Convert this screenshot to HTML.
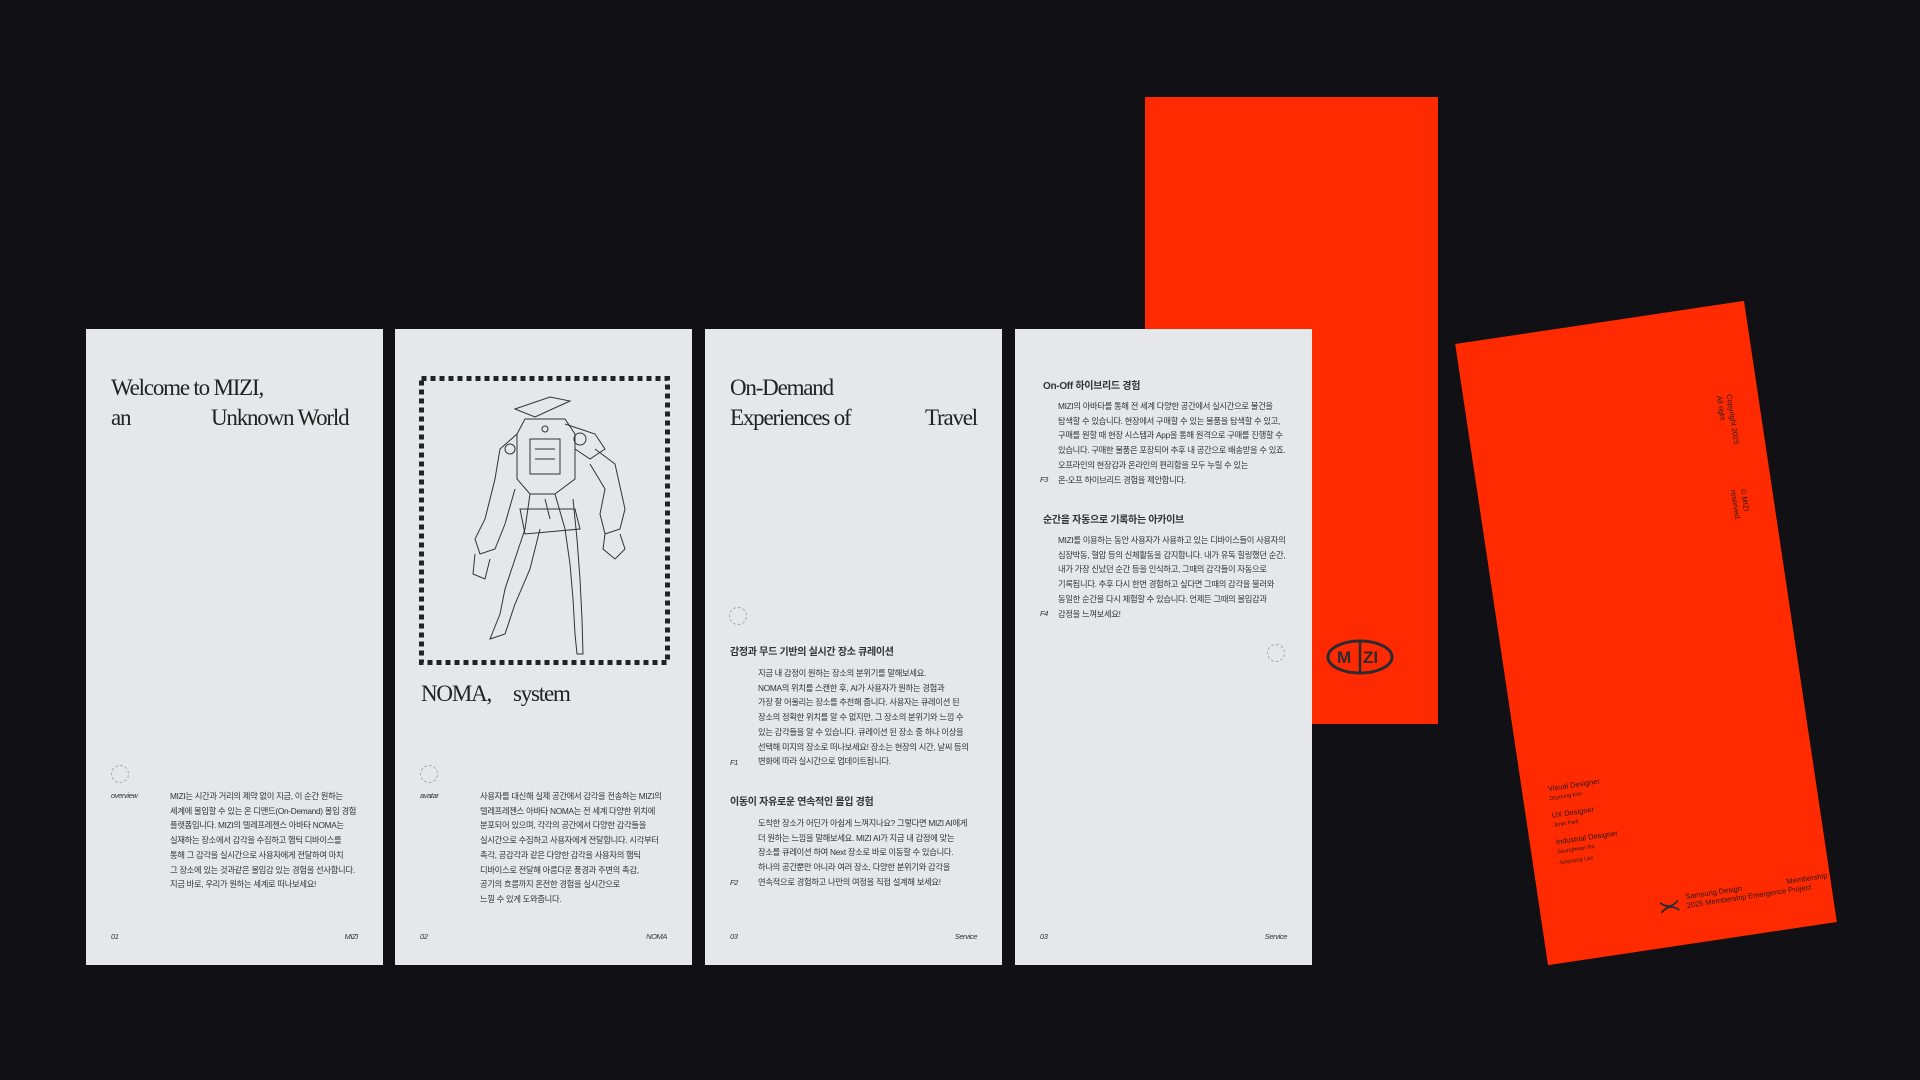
<!DOCTYPE html>
<html><head><meta charset="utf-8"><style>
*{margin:0;padding:0;box-sizing:border-box}
body{width:1920px;height:1080px;background:#111115;position:relative;overflow:hidden;font-family:"Liberation Sans","Noto Sans CJK KR",sans-serif;color:#222}
.abs{position:absolute}
.panel{position:absolute;top:329px;width:297px;height:636px;background:#e6e7eb}
.title{position:absolute;font-family:"Liberation Serif","DejaVu Serif",serif;font-size:23px;letter-spacing:-1.2px;line-height:30px;color:#222;white-space:nowrap}
.body{position:absolute;font-size:8.3px;line-height:14.7px;color:#333;white-space:nowrap;letter-spacing:-0.3px}
.h{position:absolute;font-size:10px;font-weight:bold;color:#333;white-space:nowrap;letter-spacing:-0.3px}
.sm{position:absolute;font-size:7.5px;font-style:italic;color:#333;letter-spacing:-0.4px}
.circ{position:absolute;width:18px;height:18px;border:1.3px dashed #a8a8b8;border-radius:50%}
.foot{position:absolute;top:603px;font-size:7.5px;font-style:italic;color:#333;letter-spacing:-0.4px}
</style></head><body>

<div class="abs" style="left:1145px;top:97px;width:293px;height:627px;background:#ff2a00"></div>
<svg class="abs" style="left:1325px;top:638px" width="70" height="38" viewBox="0 0 70 38">
<ellipse cx="35" cy="19" rx="32" ry="16" fill="none" stroke="#2a2a33" stroke-width="3"/>
<line x1="35" y1="3" x2="35" y2="35" stroke="#2a2a33" stroke-width="2.5"/>
<text x="12" y="25" font-family="Liberation Sans" font-weight="bold" font-size="17" fill="#2a2a33">M</text>
<text x="38" y="25" font-family="Liberation Sans" font-weight="bold" font-size="17" fill="#2a2a33">ZI</text>
</svg>

<!-- panel 1 -->
<div class="panel" style="left:86px">
<div class="title" style="left:25px;top:44px">Welcome to MIZI,</div>
<div class="title" style="left:25px;top:74px">an</div>
<div class="title" style="left:125px;top:74px">Unknown World</div>
<div class="circ" style="left:25px;top:436px"></div>
<div class="sm" style="left:25px;top:462px">overview</div>
<div class="body" style="left:84px;top:460px">MIZI는 시간과 거리의 제약 없이 지금, 이 순간 원하는<br>세계에 몰입할 수 있는 온 디맨드(On-Demand) 몰입 경험<br>플랫폼입니다. MIZI의 텔레프레젠스 아바타 NOMA는<br>실재하는 장소에서 감각을 수집하고 햅틱 디바이스를<br>통해 그 감각을 실시간으로 사용자에게 전달하여 마치<br>그 장소에 있는 것과같은 몰입감 있는 경험을 선사합니다.<br>지금 바로, 우리가 원하는 세계로 떠나보세요!</div>
<div class="foot" style="left:25px">01</div>
<div class="foot" style="right:25px">MIZI</div>
</div>

<!-- panel 2 -->
<div class="panel" style="left:395px">
<svg class="abs" style="left:24px;top:47px" width="251" height="289" viewBox="0 0 251 289"><rect x="2.5" y="2.5" width="246" height="284" fill="none" stroke="#222" stroke-width="5" stroke-dasharray="5 4"/></svg>
<svg class="abs" style="left:60px;top:60px" width="180" height="270" viewBox="0 0 180 270" fill="none" stroke="#333" stroke-width="1">
<path d="M60 20 L95 8 L115 12 L80 28 Z"/><path d="M70 30 L110 30 L120 45 L120 90 L100 105 L75 105 L62 90 L62 45 Z"/>
<path d="M75 50 L105 50 L105 85 L75 85 Z"/><path d="M110 35 L140 45 L150 60 L135 70 L120 60"/>
<path d="M62 45 L45 60 L40 90 L30 130 L20 150 L25 165 L40 160 L50 135 L60 100"/>
<path d="M140 60 L160 75 L170 120 L165 140 L150 145 L145 125 L150 100 L135 75"/>
<path d="M150 145 L148 160 L160 170 L170 160 L165 145"/><path d="M20 165 L18 185 L30 190 L35 170"/>
<path d="M75 105 L70 140 L60 170 L50 200 L45 225 L35 250 L50 245 L60 215 L75 180 L85 140"/>
<path d="M100 105 L110 140 L115 175 L118 210 L120 245 L122 265 L128 265 L127 230 L125 190 L122 150 L118 110"/>
<path d="M65 120 L120 120 L125 140 L70 145 Z"/><path d="M90 110 L95 130 M80 60 L100 60 M80 70 L100 70"/>
<circle cx="90" cy="40" r="3"/><circle cx="125" cy="50" r="6"/><circle cx="55" cy="60" r="5"/>
</svg>
<div class="title" style="left:26px;top:350px">NOMA,</div>
<div class="title" style="left:118px;top:350px">system</div>
<div class="circ" style="left:25px;top:436px"></div>
<div class="sm" style="left:25px;top:462px">avatar</div>
<div class="body" style="left:85px;top:460px">사용자를 대신해 실제 공간에서 감각을 전송하는 MIZI의<br>텔레프레젠스 아바타 NOMA는 전 세계 다양한 위치에<br>분포되어 있으며, 각각의 공간에서 다양한 감각들을<br>실시간으로 수집하고 사용자에게 전달합니다. 시각부터<br>촉각, 공감각과 같은 다양한 감각을 사용자의 햅틱<br>디바이스로 전달해 아름다운 풍경과 주변의 촉감,<br>공기의 흐름까지 온전한 경험을 실시간으로<br>느낄 수 있게 도와줍니다.</div>
<div class="foot" style="left:25px">02</div>
<div class="foot" style="right:25px">NOMA</div>
</div>

<!-- panel 3 -->
<div class="panel" style="left:705px">
<div class="title" style="left:25px;top:44px">On-Demand</div>
<div class="title" style="left:25px;top:74px">Experiences of</div>
<div class="title" style="right:25px;top:74px">Travel</div>
<div class="circ" style="left:24px;top:278px"></div>
<div class="h" style="left:25px;top:314px">감정과 무드 기반의 실시간 장소 큐레이션</div>
<div class="body" style="left:53px;top:337px">지금 내 감정이 원하는 장소의 분위기를 말해보세요.<br>NOMA의 위치를 스캔한 후, AI가 사용자가 원하는 경험과<br>가장 잘 어울리는 장소를 추천해 줍니다. 사용자는 큐레이션 된<br>장소의 정확한 위치를 알 수 없지만, 그 장소의 분위기와 느낌 수<br>있는 감각들을 알 수 있습니다. 큐레이션 된 장소 중 하나 이상을<br>선택해 미지의 장소로 떠나보세요! 장소는 현장의 시간, 날씨 등의<br>변화에 따라 실시간으로 업데이트됩니다.</div>
<div class="sm" style="left:25px;top:429px">F1</div>
<div class="h" style="left:25px;top:464px">이동이 자유로운 연속적인 몰입 경험</div>
<div class="body" style="left:53px;top:487px">도착한 장소가 어딘가 아쉽게 느껴지나요? 그렇다면 MIZI AI에게<br>더 원하는 느낌을 말해보세요. MIZI AI가 지금 내 감정에 맞는<br>장소를 큐레이션 하여 Next 장소로 바로 이동할 수 있습니다.<br>하나의 공간뿐만 아니라 여러 장소, 다양한 분위기와 감각을<br>연속적으로 경험하고 나만의 여정을 직접 설계해 보세요!</div>
<div class="sm" style="left:25px;top:549px">F2</div>
<div class="foot" style="left:25px">03</div>
<div class="foot" style="right:25px">Service</div>
</div>

<!-- panel 4 -->
<div class="panel" style="left:1015px">
<div class="h" style="left:28px;top:48px">On-Off 하이브리드 경험</div>
<div class="body" style="left:43px;top:70px">MIZI의 아바타를 통해 전 세계 다양한 공간에서 실시간으로 물건을<br>탐색할 수 있습니다. 현장에서 구매할 수 있는 물품을 탐색할 수 있고,<br>구매를 원할 때 현장 시스템과 App을 통해 원격으로 구매를 진행할 수<br>있습니다. 구매한 물품은 포장되어 추후 내 공간으로 배송받을 수 있죠.<br>오프라인의 현장감과 온라인의 편리함을 모두 누릴 수 있는<br>온-오프 하이브리드 경험을 제안합니다.</div>
<div class="sm" style="left:25px;top:146px">F3</div>
<div class="h" style="left:28px;top:182px">순간을 자동으로 기록하는 아카이브</div>
<div class="body" style="left:43px;top:204px">MIZI를 이용하는 동안 사용자가 사용하고 있는 디바이스들이 사용자의<br>심장박동, 혈압 등의 신체활동을 감지합니다. 내가 유독 힐링했던 순간,<br>내가 가장 신났던 순간 등을 인식하고, 그때의 감각들이 자동으로<br>기록됩니다. 추후 다시 한번 경험하고 싶다면 그때의 감각을 불러와<br>동일한 순간을 다시 체험할 수 있습니다. 언제든 그때의 몰입감과<br>감정을 느껴보세요!</div>
<div class="sm" style="left:25px;top:280px">F4</div>
<div class="circ" style="left:252px;top:315px"></div>
<div class="foot" style="left:25px">03</div>
<div class="foot" style="right:25px">Service</div>
</div>

<!-- rotated card -->
<div class="abs" style="left:1500px;top:319px;width:292px;height:628px;background:#ff2a00;transform:rotate(-8.5deg);color:#2a1a18">
<div class="abs" style="left:268px;top:90px;transform:rotate(90deg);transform-origin:0 0;font-size:7.5px;white-space:nowrap;line-height:10px">Copyright 2025<span style="display:inline-block;width:45px"></span>© MIZI<br>All right<span style="display:inline-block;width:70px"></span>reserved.</div>
<div class="abs" style="left:26px;top:449px;font-size:7.5px;line-height:9px;white-space:nowrap">Visual Designer<br><span style="font-size:5.5px">Doyoung Kim</span></div>
<div class="abs" style="left:26px;top:476px;font-size:7.5px;line-height:9px;white-space:nowrap">UX Designer<br><span style="font-size:5.5px">Jimin Park</span></div>
<div class="abs" style="left:26px;top:503px;font-size:7.5px;line-height:9px;white-space:nowrap">Industrial Designer<br><span style="font-size:5.5px;line-height:9px">Seunghwan Ra<br>Junyoung Lee</span></div>
<svg class="abs" style="left:118px;top:580px" width="22" height="16" viewBox="0 0 22 16" fill="none" stroke="#2a2a33" stroke-width="1.8"><path d="M2 3 Q11 12 20 3 M2 13 Q11 4 20 13"/></svg>
<div class="abs" style="left:146px;top:576px;font-size:7.5px;line-height:9px;white-space:nowrap">Samsung Design<span style="display:inline-block;width:45px"></span>Membership<br>2025 Membership Emergence Project</div>
</div>
</body></html>
